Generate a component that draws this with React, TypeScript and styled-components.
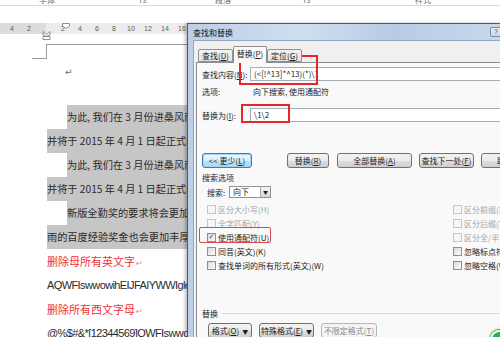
import * as React from 'react';
import styled, {createGlobalStyle} from 'styled-components';

const GlobalStyle = createGlobalStyle`
  html, body {
    margin: 0;
    padding: 0;
    background: #fff;
  }
  body {
    font-family: "Noto Sans CJK SC", "Noto Sans", sans-serif;
  }
`;

const Screen = styled.div`
  position: relative;
  width: 500px;
  height: 337px;
  overflow: hidden;
  background: #fff;
`;

/* ribbon leftovers at the very top */
const RibbonTail = styled.div`
  display: flex;
  align-items: flex-end;
  height: 5px;
  border-bottom: 1px solid #d9d9d9;
  overflow: hidden;
`;

const GroupLabel = styled.div<{$w: number}>`
  flex-shrink: 0;
  width: ${(p) => p.$w}px;
  height: 10px;
  text-align: center;
  font-size: 8px;
  line-height: 10px;
  color: #707070;
`;

const Gap = styled.div`
  height: 17px;
`;

/* ruler */
const Ruler = styled.div`
  position: relative;
  display: flex;
  height: 11px;
`;

const RulerMargin = styled.div`
  display: flex;
  flex-shrink: 0;
  width: 46px;
  padding-left: 3.5px;
  box-sizing: border-box;
  background: #dcdcdc;
`;

const RulerBody = styled.div`
  display: flex;
  flex: 1;
  padding-left: 8.5px;
  background: #ececec;
`;

const Tick = styled.span`
  flex-shrink: 0;
  width: 17px;
  text-align: center;
  font: 7px/11px "Liberation Sans", Arial, sans-serif;
  color: #5c5c5c;
`;

const Marker = styled.svg<{$x: number; $y: number}>`
  position: absolute;
  left: ${(p) => p.$x}px;
  top: ${(p) => p.$y}px;
`;

/* document page */
const Page = styled.div`
  padding-top: 10px;
`;

const CornerRow = styled.div`
  display: flex;
  height: 15px;
  padding-left: 32px;
`;

const CornerFoot = styled.div`
  width: 15px;
  box-sizing: border-box;
  border-right: 1px solid #9c9c9c;
  border-bottom: 1px solid #9c9c9c;
`;

const CornerEdge = styled.div`
  flex: 1;
  border-top: 1px solid #9c9c9c;
`;

const ReturnMark = styled.div`
  margin: 7px 0 0 65px;
  height: 12px;
  font: 9px/12px "DejaVu Sans", sans-serif;
  color: #6a6a6a;
`;

const TextBlock = styled.div`
  margin-top: 27px;
  padding-left: 47px;
`;

const DocLine = styled.div<{$hl?: boolean; $indent?: boolean; $red?: boolean; $latin?: boolean}>`
  height: 24px;
  margin-left: ${(p) => (p.$indent ? 20 : 0)}px;
  white-space: nowrap;
  overflow: hidden;
  font-size: ${(p) => (p.$red ? 11 : p.$latin ? 11 : 10.2)}px;
  line-height: 24px;
  color: ${(p) => (p.$red ? '#ec3338' : '#2a2a2a')};
  background: ${(p) => (p.$hl ? '#c6c6c6' : 'transparent')};
  font-family: ${(p) =>
    p.$latin
      ? '"Liberation Sans", Arial, sans-serif'
      : '"Noto Sans CJK SC", sans-serif'};
  letter-spacing: ${(p) => (p.$latin ? '-0.6px' : '0')};
`;

const Pilcrow = styled.span`
  font: 8px "DejaVu Sans", sans-serif;
  color: #f08a8c;
  margin-left: 1px;
`;

/* dialog window */
const Dialog = styled.div`
  position: absolute;
  left: 187px;
  top: 23px;
  width: 330px;
  height: 330px;
  display: flex;
  flex-direction: column;
  border-left: 1px solid #4d5968;
  border-top: 1px solid #4d5968;
  background: linear-gradient(90deg, #bccfe7 0%, #cfdff1 35%, #b7cce5 62%, #c7daee 100%);
  box-shadow: -2px 0 3px rgba(0, 0, 0, 0.25);
  font-size: 8px;
  color: #1b1b1b;
`;

const TitleBar = styled.div`
  display: flex;
  align-items: center;
  justify-content: space-between;
  height: 16px;
  padding: 0 8px 0 5px;
`;

const Title = styled.span`
  font-size: 8px;
  color: #101010;
`;

const HelpButton = styled.div`
  width: 20px;
  height: 10px;
  box-sizing: border-box;
  border: 1px solid #7d8898;
  border-radius: 2px;
  background: linear-gradient(#eef2f7, #c9d4e2);
  font: 7px/8px "Liberation Sans", sans-serif;
  color: #444;
  padding-left: 3px;
`;

const Body = styled.div`
  flex: 1;
  display: flex;
  flex-direction: column;
  margin-left: 5px;
  background: #f0f0f0;
  border-left: 1px solid #95a8be;
  border-top: 1px solid #95a8be;
`;

const TabRow = styled.div`
  display: flex;
  align-items: flex-end;
  height: 16px;
  margin-top: 5px;
  padding-left: 4px;
`;

const Tab = styled.div<{$w: number; $active?: boolean}>`
  position: relative;
  z-index: 1;
  width: ${(p) => p.$w}px;
  height: ${(p) => (p.$active ? 17 : 13)}px;
  margin-bottom: ${(p) => (p.$active ? -1 : 0)}px;
  box-sizing: border-box;
  border: 1px solid #8e8f8f;
  border-bottom: ${(p) => (p.$active ? 'none' : '1px solid #8e8f8f')};
  border-radius: 2px 2px 0 0;
  background: ${(p) =>
    p.$active ? '#f9f9f9' : 'linear-gradient(#f4f4f4, #e2e2e2)'};
  text-align: center;
  line-height: ${(p) => (p.$active ? 14 : 11)}px;
  font-size: 8px;
`;

const Panel = styled.div`
  flex: 1;
  margin-left: 2px;
  padding-left: 5px;
  border: 1px solid #8a8d94;
  background: #f9f9f9;
`;

const FieldRow = styled.div<{$top: number}>`
  display: flex;
  align-items: center;
  height: 14px;
  margin-top: ${(p) => p.$top}px;
`;

const FieldLabel = styled.div`
  flex-shrink: 0;
  width: 48px;
  white-space: nowrap;
`;

const Input = styled.div`
  flex: 1;
  height: 14px;
  box-sizing: border-box;
  padding-left: 3px;
  border: 1px solid #a5acb5;
  background: #fff;
  line-height: 12px;
  white-space: nowrap;
`;

const PlainValue = styled.div`
  padding-left: 3px;
  white-space: nowrap;
`;

const ButtonRow = styled.div<{$top: number; $left: number}>`
  display: flex;
  gap: 7px;
  height: 15px;
  margin-top: ${(p) => p.$top}px;
  padding-left: ${(p) => p.$left}px;
`;

const Button = styled.div<{$w: number; $focus?: boolean; $off?: boolean; $after?: number}>`
  flex-shrink: 0;
  width: ${(p) => p.$w}px;
  height: 15px;
  margin-right: ${(p) => p.$after || 0}px;
  box-sizing: border-box;
  border: 1px solid ${(p) => (p.$focus ? '#3c7fb1' : p.$off ? '#b3b7ba' : '#707070')};
  border-radius: 3px;
  background: ${(p) =>
    p.$focus
      ? 'linear-gradient(#eef7fd 0%, #d9eefb 50%, #bee3f8 51%, #a9d9f5 100%)'
      : p.$off
      ? '#f4f4f4'
      : 'linear-gradient(#f3f3f3 0%, #ebebeb 50%, #dddddd 51%, #d0d0d0 100%)'};
  box-shadow: ${(p) => (p.$focus ? 'inset 0 0 0 1px #9fd6f4' : 'none')};
  color: ${(p) => (p.$off ? '#8a8a8a' : '#1b1b1b')};
  text-align: center;
  line-height: 13px;
  white-space: nowrap;
`;

const Caret = styled.span`
  font-size: 6px;
  margin-left: 3px;
`;

const SectionRow = styled.div<{$top: number}>`
  display: flex;
  align-items: center;
  height: 12px;
  margin-top: ${(p) => p.$top}px;
`;

const SectionLine = styled.div`
  flex: 1;
  margin-left: 4px;
  border-top: 1px solid #d6dde3;
`;

const SearchRow = styled.div`
  display: flex;
  align-items: center;
  height: 12px;
  margin-top: 3px;
  padding-left: 5px;
`;

const SearchLabel = styled.span`
  width: 22px;
`;

const Select = styled.div`
  display: flex;
  width: 42px;
  height: 12px;
  box-sizing: border-box;
  border: 1px solid #8f9398;
  background: #fff;
`;

const SelectText = styled.span`
  flex: 1;
  padding-left: 3px;
  line-height: 10px;
`;

const SelectArrow = styled.span`
  width: 9px;
  border-left: 1px solid #a7abb0;
  background: linear-gradient(#f4f4f4, #d8d8d8);
  font-size: 5px;
  line-height: 10px;
  text-align: center;
`;

const OptionGrid = styled.div`
  display: grid;
  grid-template-columns: 246px auto;
  grid-auto-rows: 14px;
  margin-top: 4px;
  padding-left: 5px;
`;

const Option = styled.div<{$off?: boolean}>`
  display: flex;
  align-items: center;
  white-space: nowrap;
  color: ${(p) => (p.$off ? '#a3a3a3' : '#1b1b1b')};
`;

const Box = styled.span<{$off?: boolean}>`
  flex-shrink: 0;
  width: 9px;
  height: 9px;
  box-sizing: border-box;
  margin-right: 2px;
  border: 1px solid ${(p) => (p.$off ? '#c6c6c6' : '#8e8f8f')};
  background: ${(p) =>
    p.$off ? '#f6f6f6' : 'linear-gradient(135deg, #dcdcdc, #fafafa)'};
  color: #3a4f8c;
  font: bold 7px/7px "DejaVu Sans", sans-serif;
  text-align: center;
`;

/* annotations drawn over the screenshot */
const RedFrame = styled.div<{$x: number; $y: number; $w: number; $h: number; $thin?: boolean}>`
  position: absolute;
  left: ${(p) => p.$x}px;
  top: ${(p) => p.$y}px;
  width: ${(p) => p.$w}px;
  height: ${(p) => p.$h}px;
  box-sizing: border-box;
  border: ${(p) => (p.$thin ? '1.5px solid #e0474b' : '2px solid #e5262b')};
  border-radius: ${(p) => (p.$thin ? 2 : 0)}px;
`;

const Badge = styled.svg`
  position: absolute;
  left: 484px;
  top: 323px;
`;

const docLines = [
  {text: '为此, 我们在 3 月份进桑风雨活动，相关奖励', hl: true, indent: true},
  {text: '并将于 2015 年 4 月 1 日起正式调整规则', hl: true},
  {text: '为此, 我们在 3 月份进桑风雨活动，相关奖励', hl: true, indent: true},
  {text: '并将于 2015 年 4 月 1 日起正式调整规则', hl: true},
  {text: '新版全勤奖的要求将会更加严格，同时', hl: true, indent: true},
  {text: '雨的百度经验奖金也会更加丰厚。', hl: true},
];

const leftOptions = [
  {label: '区分大小写(H)', off: true},
  {label: '全字匹配(Y)', off: true},
  {label: '使用通配符(U)', checked: true},
  {label: '同音(英文)(K)'},
  {label: '查找单词的所有形式(英文)(W)'},
];

const rightOptions = [
  {label: '区分前缀(X)', off: true},
  {label: '区分后缀(T)', off: true},
  {label: '区分全/半角(M)', off: true},
  {label: '忽略标点符号(S)'},
  {label: '忽略空格(W)'},
];

const Check = ({label, off, checked}: {label: string; off?: boolean; checked?: boolean}) => (
  <Option $off={off}>
    <Box $off={off}>{checked ? '✓' : ''}</Box>
    {label}
  </Option>
);

const App = () => {
  const options = leftOptions.flatMap((o, i) => [
    <Check key={'l' + i} {...o} />,
    <Check key={'r' + i} {...rightOptions[i]} />,
  ]);

  return (
    <Screen>
      <GlobalStyle />
      <RibbonTail>
        <GroupLabel $w={94}>字体</GroupLabel>
        <GroupLabel $w={98}>rs</GroupLabel>
        <GroupLabel $w={62}>段落</GroupLabel>
        <GroupLabel $w={106}>rs</GroupLabel>
        <GroupLabel $w={126}>样式</GroupLabel>
      </RibbonTail>
      <Gap />
      <Ruler>
        <RulerMargin>
          <Tick>4</Tick>
          <Tick>2</Tick>
        </RulerMargin>
        <RulerBody>
          {['2', '4', '6', '8', '10', '12', '14', '16'].map((n, i) => (
            <Tick key={i}>{n}</Tick>
          ))}
        </RulerBody>
        <Marker $x={42} $y={8} width="9" height="9" viewBox="0 0 9 9">
          <path d="M1 0.5 L4.5 3.5 L8 0.5 V4 L4.5 5.5 L1 4 Z M1 5.5 H8 V8.5 H1 Z" fill="#fff" stroke="#777" strokeWidth="0.8" />
        </Marker>
        <Marker $x={62} $y={0} width="8" height="6" viewBox="0 0 8 6">
          <path d="M0.5 0.5 H7.5 V3 L4 5.5 L0.5 3 Z" fill="#fff" stroke="#777" strokeWidth="0.8" />
        </Marker>
      </Ruler>

      <Page>
        <CornerRow>
          <CornerFoot />
          <CornerEdge />
        </CornerRow>
        <ReturnMark>↵</ReturnMark>
        <TextBlock>
          {docLines.map((l, i) => (
            <DocLine key={i} $hl={l.hl} $indent={l.indent}>
              {l.text}
            </DocLine>
          ))}
          <DocLine $red>
            删除母所有英文字<Pilcrow>↵</Pilcrow>
          </DocLine>
          <DocLine $latin>AQWFIswwowihEIJFAIYWWIglekjsdf</DocLine>
          <DocLine $red>
            删除所有西文字母<Pilcrow>↵</Pilcrow>
          </DocLine>
          <DocLine $latin>@%$#&amp;*[12344569]QWFIswwowih</DocLine>
        </TextBlock>
      </Page>

      <Dialog>
        <TitleBar>
          <Title>查找和替换</Title>
          <HelpButton>?</HelpButton>
        </TitleBar>
        <Body>
          <TabRow>
            <Tab $w={35}>
              查找(<u>D</u>)
            </Tab>
            <Tab $w={34} $active>
              替换(<u>P</u>)
            </Tab>
            <Tab $w={35}>
              定位(<u>G</u>)
            </Tab>
          </TabRow>
          <Panel>
            <FieldRow $top={4}>
              <FieldLabel>
                查找内容(<u>N</u>):
              </FieldLabel>
              <Input>{'(<[!^13]*^13)(*)\\1'}</Input>
            </FieldRow>
            <FieldRow $top={3}>
              <FieldLabel>选项:</FieldLabel>
              <PlainValue>向下搜索, 使用通配符</PlainValue>
            </FieldRow>
            <FieldRow $top={10}>
              <FieldLabel>
                替换为(<u>I</u>):
              </FieldLabel>
              <Input>{'\\1\\2'}</Input>
            </FieldRow>

            <ButtonRow $top={31} $left={0}>
              <Button $w={50} $focus $after={28}>
                {'<< 更少('}
                <u>L</u>)
              </Button>
              <Button $w={42}>
                替换(<u>R</u>)
              </Button>
              <Button $w={75} style={{marginLeft: 1}}>
                全部替换(<u>A</u>)
              </Button>
              <Button $w={55}>
                查找下一处(<u>F</u>)
              </Button>
              <Button $w={48}>取消</Button>
            </ButtonRow>

            <SectionRow $top={3}>搜索选项</SectionRow>
            <SearchRow>
              <SearchLabel>搜索:</SearchLabel>
              <Select>
                <SelectText>向下</SelectText>
                <SelectArrow>▼</SelectArrow>
              </Select>
            </SearchRow>
            <OptionGrid>{options}</OptionGrid>

            <SectionRow $top={35}>
              替换
              <SectionLine />
            </SectionRow>
            <ButtonRow $top={4} $left={6}>
              <Button $w={44}>
                格式(<u>O</u>)<Caret>▼</Caret>
              </Button>
              <Button $w={55}>
                特殊格式(<u>E</u>)<Caret>▼</Caret>
              </Button>
              <Button $w={56} $off>
                不限定格式(<u>T</u>)
              </Button>
            </ButtonRow>
          </Panel>
        </Body>
      </Dialog>

      <RedFrame $x={239} $y={55} $w={79} $h={30} />
      <RedFrame $x={241} $y={104} $w={49} $h={19} />
      <RedFrame $x={199} $y={227} $w={72} $h={16} $thin />

      <Badge width="30" height="30" viewBox="0 0 30 30">
        <circle cx="16" cy="17" r="13" fill="#e9efe9" />
        <circle cx="16" cy="17" r="11" fill="#2fae4a" />
        <path d="M9 22 A8 8 0 0 1 22 11" fill="none" stroke="#fff" strokeWidth="2.2" />
        <path d="M13 24 A5 5 0 0 1 21 17" fill="none" stroke="#fff" strokeWidth="1.8" />
      </Badge>
    </Screen>
  );
};

export default App;
